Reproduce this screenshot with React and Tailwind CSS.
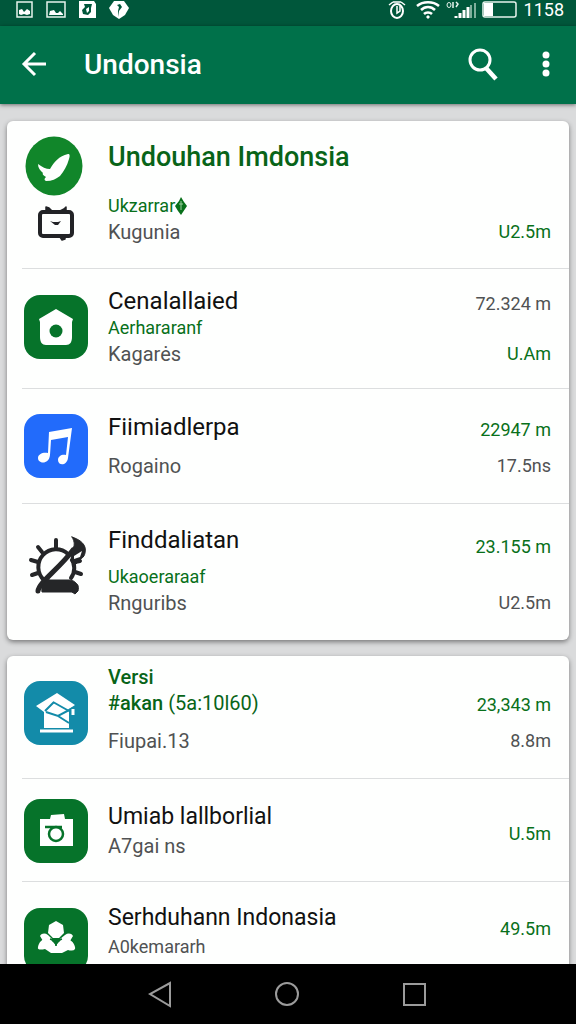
import React from 'react';
import clsx from 'clsx';

const Tile = ({ className, children }) => (
  <div className={clsx('w-16 h-16 rounded-2xl', className)}>
    <svg viewBox="0 0 64 64" className="w-16 h-16" fill="none">{children}</svg>
  </div>
);

const CheckAndTvIcon = () => (
  <svg viewBox="0 0 64 108" className="w-16 h-[108px]" fill="none">
    <ellipse cx="30" cy="31" rx="28.5" ry="29.5" fill="#11862a" />
    <path d="M14 29c4 3 8 5 12 5 4-7 9-13 18-15 2 0 2 2 1 5-2 7-5 12-9 17-4 3-8 5-14 5-2-1-2-2 0-4-3-2-4-3-3-4-3-3-5-5-5-9z" fill="#fff" />
    <rect x="16" y="77" width="32" height="24" rx="3" stroke="#222326" strokeWidth="4" />
    <path d="M22 76v-4l3 1 3 3M36 76l4-2 2-2v4M36 102l2 3 3-1v-2" fill="#222326" stroke="#222326" strokeWidth="1.500" strokeLinejoin="round" />
    <path d="M26 86l3 1h5l3-1-3 4h-3z" fill="#222326" />
  </svg>
);

const HouseIcon = () => (
  <Tile className="bg-[#06732a]">
    <path d="M32 14l17 10-1 3v15c0 5-2 8-6 8H22c-4 0-6-3-6-8V27l-1-3z" fill="#fff" />
    <circle cx="32" cy="36" r="6.500" fill="#06732a" />
  </Tile>
);

const MusicIcon = () => (
  <Tile className="bg-[#226bfb]">
    <path d="M25 18l23-4-4 30c-1 8-10 8-10 2 0-4 4-6 8-5l2-18-17 3-1 15c-1 10-12 9-12 3 0-4 5-6 10-5z" fill="#fff" />
  </Tile>
);

const GearIcon = () => (
  <svg viewBox="0 0 64 64" className="w-16 h-16" fill="none" stroke="#252628" strokeLinecap="round">
    <path d="M20 46a17 17 0 0 1 24-26M47 24a17 17 0 0 1 0 20" strokeWidth="4" />
    <path d="M32 14V6M18 18l-4-5M14 28l-7-2M14 39l-6 2M51 38l6 2M51 28l5-1" strokeWidth="4" />
    <path d="M19 54c4-8 15-17 29-35" stroke="#fff" strokeWidth="5" />
    <path d="M14 57c1-9 21-22 35-41" strokeWidth="5" />
    <path d="M48 3c9 3 15 8 13 16-1 5-4 5-7 9l-4 4-3-5 1-11c3-4 3-8 0-13z" fill="#252628" strokeWidth="1" />
    <path d="M50 22l8-5-2 6-6 2z" fill="#fff" stroke="none" />
    <path d="M25 46h20c5 0 8 3 8 7l-2 5H18c-1-6 2-12 7-12z" fill="#252628" strokeWidth="1" />
    <path d="M50 49c4 0 5 3 4 8l-3 3-3-2z" fill="#252628" strokeWidth="1" />
  </svg>
);

const SchoolIcon = () => (
  <Tile className="bg-[#138ba9]">
    <path d="M33 12l18 12-6 4v19H20V31l-8-6z" fill="#fff" />
    <path d="M21 30l9-9M29 21l16 9" stroke="#138ba9" strokeWidth="2" />
    <path d="M22 31l12 4 15-8M34 35l11 7" stroke="#138ba9" strokeWidth="2" />
    <path d="M49 28v6" stroke="#fff" strokeWidth="3" />
    <path d="M16 50h33" stroke="#fff" strokeWidth="3" />
  </Tile>
);

const CameraIcon = () => (
  <Tile className="bg-[#06732a]">
    <path d="M16 20h10l1-4 13-1 1 5h8v27H16z" fill="#fff" />
    <path d="M21 28h17" stroke="#06732a" strokeWidth="2.500" />
    <circle cx="32" cy="35" r="7" stroke="#06732a" strokeWidth="2.500" />
  </Tile>
);

const TreesIcon = () => (
  <Tile className="bg-[#06732a]">
    <path d="M32 13l7 4 1 8-5 5h-6l-5-5 1-8zM16 28c2-3 5-3 8-1l4 4-1 5-8-3zM49 28c-2-3-5-3-8-1l-5 4 1 5 9-3z" fill="#fff" />
    <path d="M14 39c1-5 4-8 8-8s8 3 10 7c2-4 6-7 10-7s8 3 9 8c1 4-4 4-7 3l-6 3H27l-6-4c-4 1-8 1-7-2z" fill="#fff" />
    <path d="M26 31c4 1 6 4 6 7 0-3 2-6 6-7" stroke="#06732a" strokeWidth="1.500" />
  </Tile>
);

const green = 'text-[#08701a]';
const gray = 'text-[#505253]';

const downloads = [
  {
    icon: <CheckAndTvIcon />,
    title: 'Undouhan Imdonsia',
    titleClass: 'text-[27px] font-medium text-[#086418]',
    lines: [{ text: 'Ukzarrar', color: green, small: true, leaf: true }, { text: 'Kugunia', color: gray }],
    values: [{ text: 'U2.5m', color: green }],
    row: 'pt-[22px] pb-[23px]',
    gap: 'mt-[22px]',
    side: 'justify-end',
    iconBox: 'self-start -mt-2 -mb-4',
  },
  {
    icon: <HouseIcon />,
    title: 'Cenalallaied',
    titleClass: 'text-2xl text-[#111]',
    lines: [{ text: 'Aerhararanf', color: green, small: true }, { text: 'Kagarės', color: gray }],
    values: [{ text: '72.324 m', color: gray }, { text: 'U.Am', color: green }],
    row: 'pt-[18px] pb-[21px]',
    side: 'justify-between pt-1',
  },
  {
    icon: <MusicIcon />,
    title: 'Fiimiadlerpa',
    titleClass: 'text-2xl text-[#111]',
    lines: [{ text: 'Rogaino', color: gray }],
    values: [{ text: '22947 m', color: green }, { text: '17.5ns', color: gray }],
    row: 'pt-6 pb-6',
    gap: 'mt-3',
    side: 'justify-between pt-1',
  },
  {
    icon: <GearIcon />,
    title: 'Finddaliatan',
    titleClass: 'text-2xl text-[#111]',
    lines: [{ text: 'Ukaoeraraaf', color: green, small: true }, { text: 'Rnguribs', color: gray }],
    values: [{ text: '23.155 m', color: green }, { text: 'U2.5m', color: gray }],
    row: 'pt-[22px] pb-6',
    gap: 'mt-2.5',
    side: 'justify-between pt-2',
    iconBox: 'self-start mt-2',
  },
];

const versions = [
  {
    icon: <SchoolIcon />,
    heading: ['Versi', '#akan', '(5a:10l60)'],
    lines: [{ text: 'Fiupai.13', color: gray }],
    values: [{ text: '23,343 m', color: green }, { text: '8.8m', color: gray }],
    row: 'pt-2 pb-6',
    gap: 'mt-3',
    side: 'justify-between pt-7',
    iconBox: 'pt-2',
  },
  {
    icon: <CameraIcon />,
    title: 'Umiab lallborlial',
    titleClass: 'text-[23px] text-[#111]',
    lines: [{ text: 'A7gai ns', color: gray }],
    values: [{ text: 'U.5m', color: green }],
    row: 'pt-5 pb-[18px]',
    gap: 'mt-0.5',
    side: 'pt-[22px]',
  },
  {
    icon: <TreesIcon />,
    title: 'Serhduhann Indonasia',
    titleClass: 'text-[23px] text-[#111]',
    lines: [{ text: 'A0kemararh', color: gray, small: true }, { text: 'Rogaino', color: green }],
    values: [{ text: '49.5m', color: green }],
    row: 'pt-[22px] pb-6',
    gap: 'mt-0.5',
    side: 'pt-3',
    iconBox: 'self-start pt-1',
  },
];

const Row = ({ item }) => (
  <li className={clsx('ml-[15px] flex items-center gap-5 pl-0.5 pr-[18px] border-b border-[#dcdedf] last:border-b-0', item.row)}>
    <div className={clsx('shrink-0', item.iconBox)}>{item.icon}</div>
    <div className="flex-1 min-w-0">
      {item.heading ? (
        <h2 className="text-xl leading-[26px] font-medium text-[#086418]">
          {item.heading[0]}<br />
          {item.heading[1]} <span className="font-normal">{item.heading[2]}</span>
        </h2>
      ) : (
        <h2 className={clsx('leading-7 whitespace-nowrap', item.titleClass)}>
          {item.title}
        </h2>
      )}
      <div className={item.gap}>
        {item.lines.map((line) => (
          <p key={line.text} className={clsx('flex items-center leading-[26px]', line.small ? 'text-[18px]' : 'text-xl', line.color)}>
            {line.text}
            {line.leaf && (
              <svg viewBox="0 0 12 18" className="w-3 h-[18px]">
                <path d="M6 0l3 5 3 4-4 6-2 3-3-4-3-5 4-5z" fill="#08701a" />
                <path d="M6 4v9M4 7h4" stroke="#9bcf9f" strokeWidth="1" />
              </svg>
            )}
          </p>
        ))}
      </div>
    </div>
    <div className={clsx('self-stretch flex flex-col text-right text-[18px] leading-[26px]', item.side)}>
      {item.values.map((value) => (
        <span key={value.text} className={value.color}>{value.text}</span>
      ))}
    </div>
  </li>
);

const Card = ({ items }) => (
  <ul className="bg-[#fefffe] rounded-md shadow-[0_2px_5px_rgba(0,0,0,0.45)]">
    {items.map((item, i) => <Row key={i} item={item} />)}
  </ul>
);

const StatusBar = () => (
  <div className="h-[26px] shrink-0 bg-[#00573b] text-white flex items-start justify-between pl-4 pr-3">
    <div className="flex gap-[13px] pt-px">
      <svg viewBox="0 0 17 17" className="w-[17px] h-[17px]" fill="none">
        <rect x="1" y="1" width="15" height="15" stroke="#e6f3ed" strokeWidth="1.500" />
        <path d="M3 9l3-1 2 3 3-3 3 2v3l-3 1-3-1-3 1-2-1z" fill="#fff" />
      </svg>
      <svg viewBox="0 0 20 17" className="w-5 h-[17px]" fill="none">
        <rect x="1" y="1" width="18" height="15" stroke="#e6f3ed" strokeWidth="1.500" />
        <path d="M3 14l1-4 4-1 2 3h2l2-2 3 3v1z" fill="#fff" />
      </svg>
      <svg viewBox="0 0 17 17" className="w-[17px] h-[17px]" fill="none">
        <path d="M0 0h15l2 3v14H0z" fill="#fff" />
        <path d="M5 3h8l-1 4v4l-3 3-5-1-1-4 3-3z" fill="#00573b" />
        <path d="M7 8l3-2v4l-2 2z" fill="#fff" />
      </svg>
      <svg viewBox="0 0 20 18" className="w-5 h-[18px]" fill="none">
        <path d="M5 0h10l5 7-4 7-6 4-6-4-4-7z" fill="#fff" />
        <path d="M8 4l3-1 2 3-3 4v6l-1-6 1-4z" fill="#00573b" />
      </svg>
    </div>
    <div className="flex gap-[7px]">
      <div className="flex gap-1.5 pt-px">
        <svg viewBox="0 0 18 18" className="w-[18px] h-[18px] mr-1" fill="none" stroke="#fff" strokeWidth="2">
          <ellipse cx="9" cy="10" rx="6" ry="7" />
          <path d="M1 4l4-3M17 4l-4-3M5 1h8M9 5v7l3-2V5" strokeWidth="1.500" />
        </svg>
        <svg viewBox="0 0 24 18" className="w-6 h-[18px]" fill="none" stroke="#fff" strokeWidth="2.500">
          <path d="M1 5c6-5 16-5 22 0M5 9c4-4 10-4 14 0M8 13c2-2 6-2 8 0" />
          <path d="M12 14l2 2-2 2-2-2z" fill="#fff" stroke="none" />
        </svg>
        <svg viewBox="0 0 30 18" className="w-[30px] h-[18px]" fill="none">
          <ellipse cx="3" cy="4" rx="2" ry="2.500" stroke="#e6f3ed" />
          <path d="M7 1v6M10 1l2 2-2 3" stroke="#e6f3ed" strokeWidth="1.500" />
          <path d="M10 17v-2M14 17v-5M18 17V9M22 17V6" stroke="#fff" strokeWidth="3" />
          <path d="M25 17V4M29 17V2" stroke="#7fb09d" strokeWidth="2" />
        </svg>
        <svg viewBox="0 0 35 18" className="w-[35px] h-[18px]" fill="none">
          <rect x="1" y="1" width="33" height="15" rx="2" stroke="#e6f3ed" strokeWidth="1.500" />
          <rect x="2" y="2" width="9" height="13" fill="#fff" />
        </svg>
      </div>
      <span className="text-[18px] leading-5">1158</span>
    </div>
  </div>
);

const Toolbar = () => (
  <header className="h-[78px] shrink-0 bg-[#00714a] text-white flex items-center pl-5 pr-4 shadow-[0_1px_4px_rgba(0,0,0,0.5)] z-10">
    <button aria-label="Back" className="w-7 h-8">
      <svg viewBox="0 0 28 32" className="w-7 h-8" fill="none" stroke="#fff" strokeWidth="3">
        <path d="M15 4L4 15l11 11M4 15h22" />
      </svg>
    </button>
    <h1 className="flex-1 pl-9 text-[28px] leading-8 font-medium">Undonsia</h1>
    <button aria-label="Search" className="w-8 h-9 mr-8">
      <svg viewBox="0 0 32 36" className="w-8 h-9" fill="none" stroke="#fff">
        <circle cx="12" cy="13" r="10" strokeWidth="3" />
        <path d="M18 21l10 11" strokeWidth="4.500" />
      </svg>
    </button>
    <button aria-label="More options" className="w-7 h-8">
      <svg viewBox="0 0 28 32" className="w-7 h-8" fill="#fff">
        <circle cx="14" cy="6" r="3.500" />
        <circle cx="14" cy="15" r="3.500" />
        <circle cx="14" cy="24" r="3.500" />
      </svg>
    </button>
  </header>
);

const NavBar = () => (
  <nav className="h-[60px] shrink-0 bg-black flex justify-center items-center z-10">
    <button aria-label="Back" className="w-[22%] flex justify-center">
      <svg viewBox="0 0 26 28" className="w-[26px] h-7" fill="none" stroke="#9b9b9b" strokeWidth="2">
        <path d="M22 3v23L2 14z" />
      </svg>
    </button>
    <button aria-label="Home" className="w-[22%] flex justify-center">
      <svg viewBox="0 0 26 28" className="w-[26px] h-7" fill="none" stroke="#9b9b9b" strokeWidth="2">
        <circle cx="12" cy="14" r="11" />
      </svg>
    </button>
    <button aria-label="Recent apps" className="w-[22%] flex justify-center">
      <svg viewBox="0 0 26 28" className="w-[26px] h-7" fill="none" stroke="#9b9b9b" strokeWidth="2">
        <rect x="2" y="4" width="21" height="21" />
      </svg>
    </button>
  </nav>
);

const App = () => (
  <div className="h-screen flex flex-col bg-[#dadbdc] font-['Roboto',sans-serif]">
    <StatusBar />
    <Toolbar />
    <main className="flex-1 min-h-0 overflow-hidden px-[7px] pt-[17px] flex flex-col gap-4">
      <Card items={downloads} />
      <Card items={versions} />
    </main>
    <NavBar />
  </div>
);

export default App;
